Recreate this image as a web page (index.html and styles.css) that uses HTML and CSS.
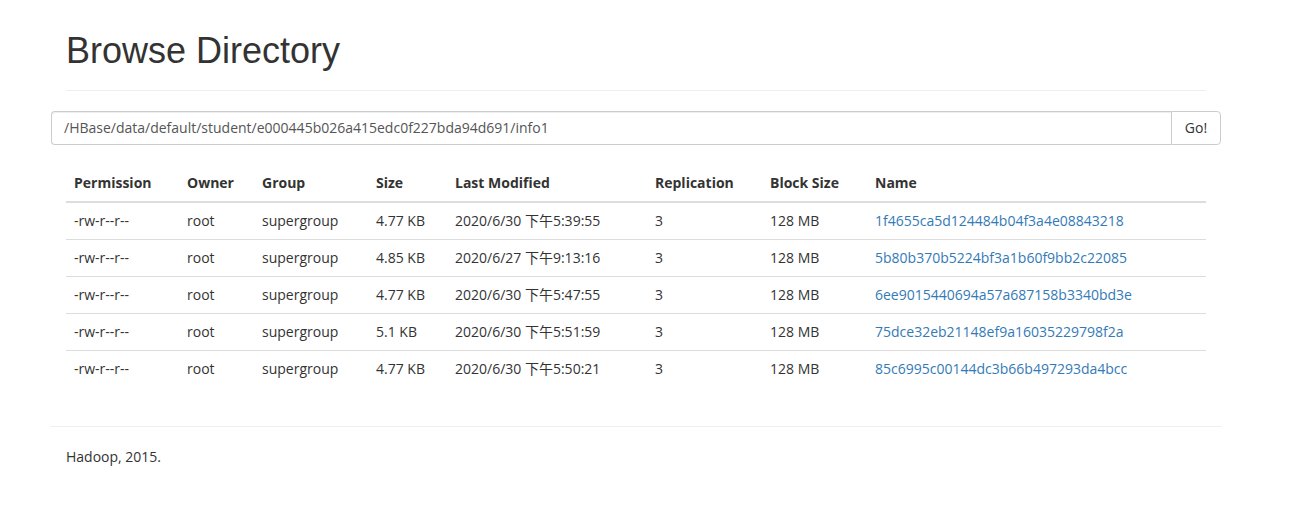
FILE: index.html
```html
<!DOCTYPE html>
<html>
<head>
    <meta charset="utf-8">
    <title>Browsing HDFS</title>
    <link rel="stylesheet" href="styles.css">
</head>
<body>
    <div class="container">
        <!-- Page title -->
        <div class="page-header">
            <h1>Browse Directory</h1>
        </div>

        <!-- Path bar -->
        <div class="row">
            <form onsubmit="return false;">
                <div class="input-group">
                    <input type="text" class="form-control" id="directory" value="/HBase/data/default/student/e000445b026a415edc0f227bda94d691/info1">
                    <button class="btn" type="submit">Go!</button>
                </div>
            </form>
        </div>
        <br>

        <!-- Directory listing -->
        <table class="table">
            <thead>
                <tr>
                    <th class="c-perm">Permission</th>
                    <th class="c-owner">Owner</th>
                    <th class="c-group">Group</th>
                    <th class="c-size">Size</th>
                    <th class="c-mod">Last Modified</th>
                    <th class="c-rep">Replication</th>
                    <th class="c-block">Block Size</th>
                    <th>Name</th>
                </tr>
            </thead>
            <tbody>
                <tr>
                    <td>-rw-r--r--</td>
                    <td>root</td>
                    <td>supergroup</td>
                    <td>4.77 KB</td>
                    <td>2020/6/30 下午5:39:55</td>
                    <td>3</td>
                    <td>128 MB</td>
                    <td><a href="#">1f4655ca5d124484b04f3a4e08843218</a></td>
                </tr>
                <tr>
                    <td>-rw-r--r--</td>
                    <td>root</td>
                    <td>supergroup</td>
                    <td>4.85 KB</td>
                    <td>2020/6/27 下午9:13:16</td>
                    <td>3</td>
                    <td>128 MB</td>
                    <td><a href="#">5b80b370b5224bf3a1b60f9bb2c22085</a></td>
                </tr>
                <tr>
                    <td>-rw-r--r--</td>
                    <td>root</td>
                    <td>supergroup</td>
                    <td>4.77 KB</td>
                    <td>2020/6/30 下午5:47:55</td>
                    <td>3</td>
                    <td>128 MB</td>
                    <td><a href="#">6ee9015440694a57a687158b3340bd3e</a></td>
                </tr>
                <tr>
                    <td>-rw-r--r--</td>
                    <td>root</td>
                    <td>supergroup</td>
                    <td>5.1 KB</td>
                    <td>2020/6/30 下午5:51:59</td>
                    <td>3</td>
                    <td>128 MB</td>
                    <td><a href="#">75dce32eb21148ef9a16035229798f2a</a></td>
                </tr>
                <tr>
                    <td>-rw-r--r--</td>
                    <td>root</td>
                    <td>supergroup</td>
                    <td>4.77 KB</td>
                    <td>2020/6/30 下午5:50:21</td>
                    <td>3</td>
                    <td>128 MB</td>
                    <td><a href="#">85c6995c00144dc3b66b497293da4bcc</a></td>
                </tr>
            </tbody>
        </table>

        <!-- Footer -->
        <div class="row footer-row">
            <hr>
            <div class="col">
                <p>Hadoop, 2015.</p>
            </div>
        </div>
    </div>
</body>
</html>
```

FILE: styles.css
```css
/* Base page */
* {
    box-sizing: border-box;
}

body {
    margin: 0;
    font-family: "Open Sans", "Noto Sans CJK SC", sans-serif;
    font-size: 14px;
    line-height: 1.42857;
    color: #333;
    background-color: #fff;
}

.container {
    width: 1170px;
    margin-left: 51px;
    padding: 0 15px;
}

.row {
    margin: 0 -15px;
}

/* Title */
.page-header {
    margin: 31px 0 20px;
    padding-bottom: 9px;
    border-bottom: 1px solid #eee;
}

h1 {
    margin: 20px 0 10px;
    font-family: "Liberation Sans", Arial, sans-serif;
    font-size: 36px;
    font-weight: 500;
    line-height: 1.1;
    color: #333;
}

/* Path input */
form {
    margin: 0;
}

.input-group {
    display: flex;
}

.form-control {
    flex: 1;
    height: 34px;
    padding: 6px 12px;
    font-family: inherit;
    font-size: 14px;
    color: #555;
    border: 1px solid #ccc;
    border-right: none;
    border-radius: 4px 0 0 4px;
    box-shadow: inset 0 1px 1px rgba(0, 0, 0, 0.075);
    outline: none;
}

.btn {
    width: 50px;
    height: 34px;
    padding: 6px 12px;
    font-family: inherit;
    font-size: 14px;
    color: #333;
    background-color: #fff;
    border: 1px solid #ccc;
    border-radius: 0 4px 4px 0;
    cursor: pointer;
}

/* Listing table */
.table {
    width: 100%;
    margin-bottom: 20px;
    border-collapse: collapse;
    border-spacing: 0;
    table-layout: fixed;
}

.table th,
.table td {
    padding: 8px;
    text-align: left;
    vertical-align: top;
    white-space: nowrap;
}

.table th {
    font-weight: bold;
    border-bottom: 2px solid #ddd;
}

.table td {
    border-top: 1px solid #ddd;
}

.table tbody tr:first-child td {
    border-top: none;
}

.c-perm { width: 113px; }
.c-owner { width: 75px; }
.c-group { width: 114px; }
.c-size { width: 79px; }
.c-mod { width: 200px; }
.c-rep { width: 115px; }
.c-block { width: 105px; }

a {
    color: #337ab7;
    text-decoration: none;
}

/* Footer */
.footer-row {
    display: flow-root;
}

hr {
    margin: 20px 0;
    border: 0;
    border-top: 1px solid #eee;
}

.col {
    padding: 0 15px;
}

.col p {
    margin: 0 0 10px;
}
```
